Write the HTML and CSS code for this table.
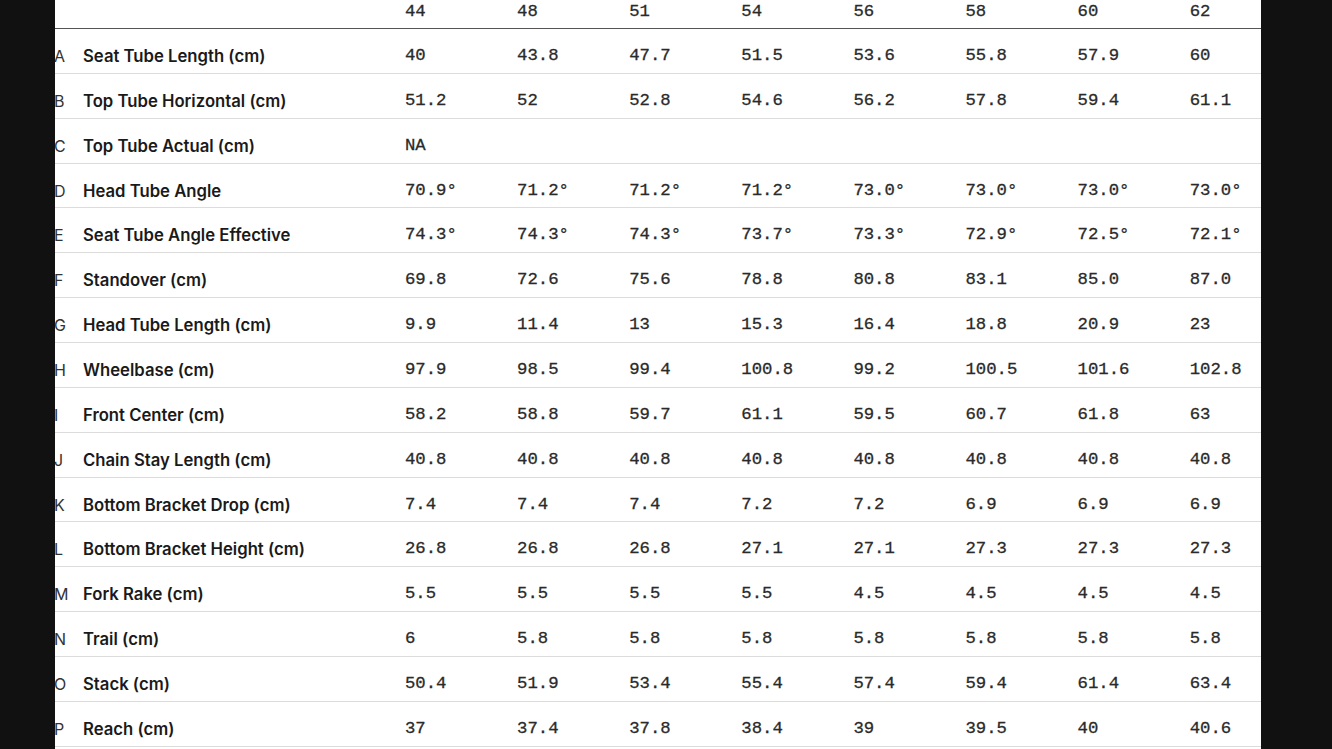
FILE: index.html
```html
<!DOCTYPE html>
<html>
<head>
<meta charset="utf-8">
<link rel="stylesheet" href="styles.css">
</head>
<body>
<div class="panel">
  <div class="geo">
    <div class="row head">
      <span class="letter"></span><span class="label"></span>
      <span class="val">44</span><span class="val">48</span><span class="val">51</span><span class="val">54</span><span class="val">56</span><span class="val">58</span><span class="val">60</span><span class="val">62</span>
    </div>
    <div class="row"><span class="letter">A</span><span class="label">Seat Tube Length (cm)</span><span class="val">40</span><span class="val">43.8</span><span class="val">47.7</span><span class="val">51.5</span><span class="val">53.6</span><span class="val">55.8</span><span class="val">57.9</span><span class="val">60</span></div>
    <div class="row"><span class="letter">B</span><span class="label">Top Tube Horizontal (cm)</span><span class="val">51.2</span><span class="val">52</span><span class="val">52.8</span><span class="val">54.6</span><span class="val">56.2</span><span class="val">57.8</span><span class="val">59.4</span><span class="val">61.1</span></div>
    <div class="row"><span class="letter">C</span><span class="label">Top Tube Actual (cm)</span><span class="val">NA</span><span class="val"></span><span class="val"></span><span class="val"></span><span class="val"></span><span class="val"></span><span class="val"></span><span class="val"></span></div>
    <div class="row"><span class="letter">D</span><span class="label">Head Tube Angle</span><span class="val">70.9°</span><span class="val">71.2°</span><span class="val">71.2°</span><span class="val">71.2°</span><span class="val">73.0°</span><span class="val">73.0°</span><span class="val">73.0°</span><span class="val">73.0°</span></div>
    <div class="row"><span class="letter">E</span><span class="label">Seat Tube Angle Effective</span><span class="val">74.3°</span><span class="val">74.3°</span><span class="val">74.3°</span><span class="val">73.7°</span><span class="val">73.3°</span><span class="val">72.9°</span><span class="val">72.5°</span><span class="val">72.1°</span></div>
    <div class="row"><span class="letter">F</span><span class="label">Standover (cm)</span><span class="val">69.8</span><span class="val">72.6</span><span class="val">75.6</span><span class="val">78.8</span><span class="val">80.8</span><span class="val">83.1</span><span class="val">85.0</span><span class="val">87.0</span></div>
    <div class="row"><span class="letter">G</span><span class="label">Head Tube Length (cm)</span><span class="val">9.9</span><span class="val">11.4</span><span class="val">13</span><span class="val">15.3</span><span class="val">16.4</span><span class="val">18.8</span><span class="val">20.9</span><span class="val">23</span></div>
    <div class="row"><span class="letter">H</span><span class="label">Wheelbase (cm)</span><span class="val">97.9</span><span class="val">98.5</span><span class="val">99.4</span><span class="val">100.8</span><span class="val">99.2</span><span class="val">100.5</span><span class="val">101.6</span><span class="val">102.8</span></div>
    <div class="row"><span class="letter">I</span><span class="label">Front Center (cm)</span><span class="val">58.2</span><span class="val">58.8</span><span class="val">59.7</span><span class="val">61.1</span><span class="val">59.5</span><span class="val">60.7</span><span class="val">61.8</span><span class="val">63</span></div>
    <div class="row"><span class="letter">J</span><span class="label">Chain Stay Length (cm)</span><span class="val">40.8</span><span class="val">40.8</span><span class="val">40.8</span><span class="val">40.8</span><span class="val">40.8</span><span class="val">40.8</span><span class="val">40.8</span><span class="val">40.8</span></div>
    <div class="row"><span class="letter">K</span><span class="label">Bottom Bracket Drop (cm)</span><span class="val">7.4</span><span class="val">7.4</span><span class="val">7.4</span><span class="val">7.2</span><span class="val">7.2</span><span class="val">6.9</span><span class="val">6.9</span><span class="val">6.9</span></div>
    <div class="row"><span class="letter">L</span><span class="label">Bottom Bracket Height (cm)</span><span class="val">26.8</span><span class="val">26.8</span><span class="val">26.8</span><span class="val">27.1</span><span class="val">27.1</span><span class="val">27.3</span><span class="val">27.3</span><span class="val">27.3</span></div>
    <div class="row"><span class="letter">M</span><span class="label">Fork Rake (cm)</span><span class="val">5.5</span><span class="val">5.5</span><span class="val">5.5</span><span class="val">5.5</span><span class="val">4.5</span><span class="val">4.5</span><span class="val">4.5</span><span class="val">4.5</span></div>
    <div class="row"><span class="letter">N</span><span class="label">Trail (cm)</span><span class="val">6</span><span class="val">5.8</span><span class="val">5.8</span><span class="val">5.8</span><span class="val">5.8</span><span class="val">5.8</span><span class="val">5.8</span><span class="val">5.8</span></div>
    <div class="row"><span class="letter">O</span><span class="label">Stack (cm)</span><span class="val">50.4</span><span class="val">51.9</span><span class="val">53.4</span><span class="val">55.4</span><span class="val">57.4</span><span class="val">59.4</span><span class="val">61.4</span><span class="val">63.4</span></div>
    <div class="row"><span class="letter">P</span><span class="label">Reach (cm)</span><span class="val">37</span><span class="val">37.4</span><span class="val">37.8</span><span class="val">38.4</span><span class="val">39</span><span class="val">39.5</span><span class="val">40</span><span class="val">40.6</span></div>
  </div>
</div>
</body>
</html>
```

FILE: styles.css
```css
html, body {
  margin: 0;
  padding: 0;
  background: #111111;
  height: 749px;
  overflow: hidden;
}

.panel {
  margin-left: 55px;
  width: 1206px;
  height: 749px;
  background: #ffffff;
  overflow: hidden;
}

.geo {
  margin-left: -1px;
  width: 1400px;
}

.row {
  display: grid;
  grid-template-columns: 29px 322px repeat(8, 112.1px);
  height: 43.87px;
  border-bottom: 1px solid #dcdcdc;
  align-items: start;
  box-sizing: content-box;
}

.row.head {
  height: 28px;
  border-bottom: 1px solid #555555;
}

.row > span {
  display: block;
  line-height: 20px;
  padding-top: 17px;
  white-space: nowrap;
}

.row.head > span {
  padding-top: 2px;
}

.letter {
  font-family: Inter, "Liberation Sans", sans-serif;
  font-size: 16px;
  color: #333333;
}

.label {
  font-family: Inter, "Liberation Sans", sans-serif;
  font-weight: 600;
  font-size: 16.7px;
  color: #1a1a1a;
}

.val {
  font-family: "Liberation Mono", "DejaVu Sans Mono", monospace;
  font-size: 17.3px;
  color: #2a2a2a;
  -webkit-text-stroke: 0.3px #2a2a2a;
}
```
